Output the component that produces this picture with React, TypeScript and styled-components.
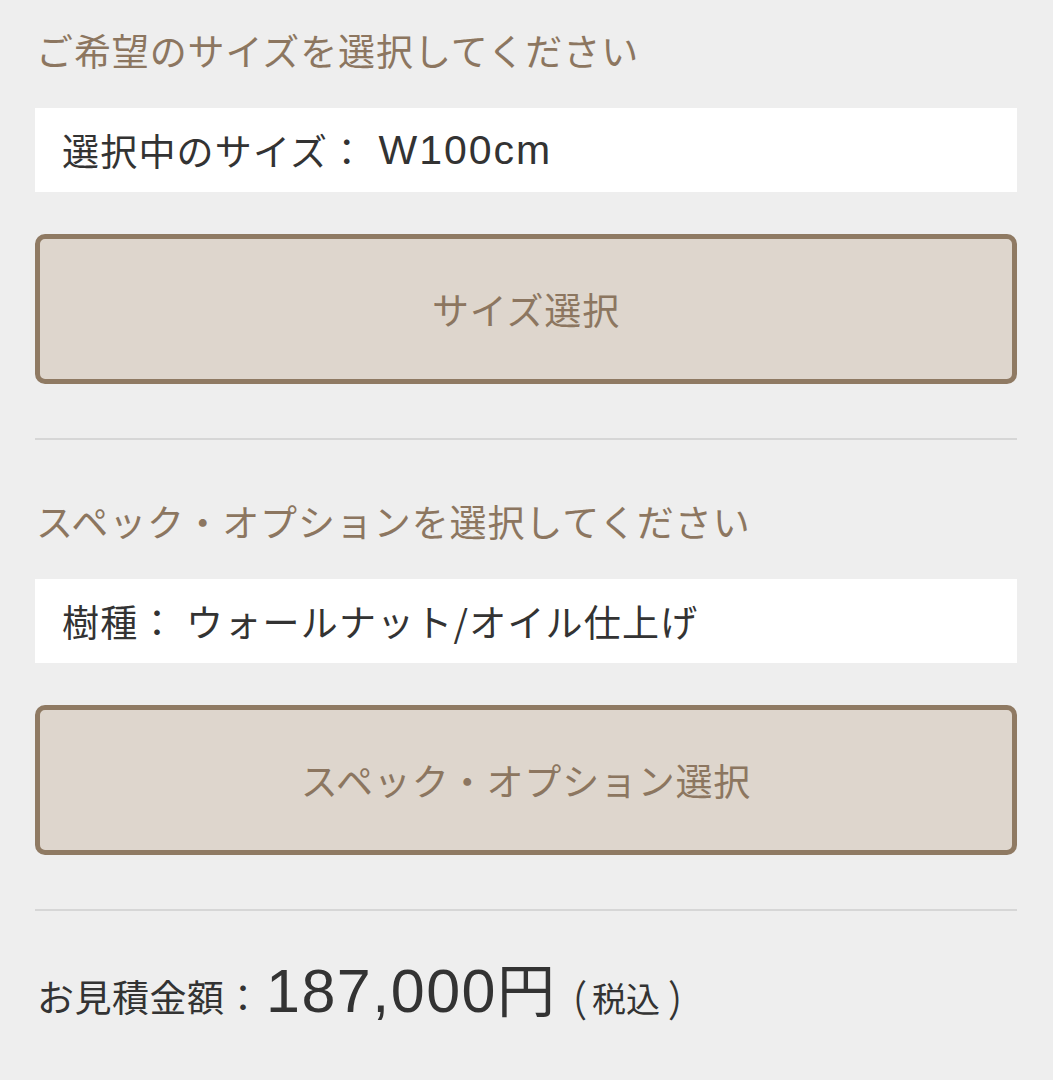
import styled, { createGlobalStyle } from 'styled-components';

const GlobalStyle = createGlobalStyle`
  html, body {
    margin: 0;
    padding: 0;
    background: #eeeeee;
  }
  body {
    font-family: "Liberation Sans", "Noto Sans CJK JP", sans-serif;
  }
`;

const Page = styled.div`
  padding: 0 36px 0 35px;
  background: #eeeeee;
  min-height: 1080px;
  box-sizing: border-box;
`;

const Section = styled.section<{ $first?: boolean }>`
  padding-top: ${(p) => (p.$first ? '22px' : '53px')};
  padding-bottom: 54px;
  border-bottom: 2px solid #d6d6d6;
`;

const SectionTitle = styled.h2`
  margin: 0 0 30px 1px;
  font-family: "Noto Sans CJK JP", sans-serif;
  font-size: 37px;
  line-height: 56px;
  font-weight: 400;
  letter-spacing: 0.9px;
  color: #8c7660;
`;

const CurrentValue = styled.div`
  height: 84px;
  display: flex;
  align-items: center;
  padding-left: 27px;
  background: #ffffff;
  font-family: "Noto Sans CJK JP", sans-serif;
  font-size: 37px;
  letter-spacing: 1.2px;
  color: #333333;
`;

const Latin = styled.span`
  font-family: "Liberation Sans", sans-serif;
  font-size: 41px;
  letter-spacing: 2px;
  margin-left: 12px;
`;

const SelectButton = styled.button`
  display: flex;
  align-items: center;
  justify-content: center;
  width: 100%;
  height: 150px;
  margin-top: 42px;
  border: 5px solid #8f7a63;
  border-radius: 10px;
  background: #ded6cd;
  font-family: "Noto Sans CJK JP", sans-serif;
  font-size: 37px;
  letter-spacing: 0.8px;
  color: #8c7660;
  cursor: pointer;
`;

const Estimate = styled.div`
  display: flex;
  align-items: baseline;
  padding: 34px 0 0 2px;
  color: #333333;
`;

const EstimateLabel = styled.span`
  font-family: "Noto Sans CJK JP", sans-serif;
  font-size: 37px;
  letter-spacing: 0.5px;
`;

const EstimatePrice = styled.span`
  font-size: 61px;
  letter-spacing: 1.5px;
  margin-left: 4px;
`;

const Yen = styled.span`
  font-family: "Noto Sans CJK JP", sans-serif;
  font-size: 58px;
`;

const EstimateNote = styled.span`
  font-family: "Noto Sans CJK JP", sans-serif;
  font-size: 34px;
  margin-left: -2px;
`;

const Paren = styled.span<{ $side: 'open' | 'close' }>`
  display: inline-block;
  transform: scaleY(1.25);
  ${(p) => (p.$side === 'open' ? 'margin-right: 5px;' : 'margin-left: 8px;')}
`;

export default function App() {
  return (
    <>
      <GlobalStyle />
      <Page>
        <Section $first>
          <SectionTitle>ご希望のサイズを選択してください</SectionTitle>
          <CurrentValue>
            選択中のサイズ：<Latin>W100cm</Latin>
          </CurrentValue>
          <SelectButton>サイズ選択</SelectButton>
        </Section>
        <Section>
          <SectionTitle>スペック・オプションを選択してください</SectionTitle>
          <CurrentValue>樹種： ウォールナット/オイル仕上げ</CurrentValue>
          <SelectButton>スペック・オプション選択</SelectButton>
        </Section>
        <Estimate>
          <EstimateLabel>お見積金額：</EstimateLabel>
          <EstimatePrice>187,000</EstimatePrice>
          <Yen>円</Yen>
          <EstimateNote>
            <Paren $side="open">（</Paren>税込<Paren $side="close">）</Paren>
          </EstimateNote>
        </Estimate>
      </Page>
    </>
  );
}
